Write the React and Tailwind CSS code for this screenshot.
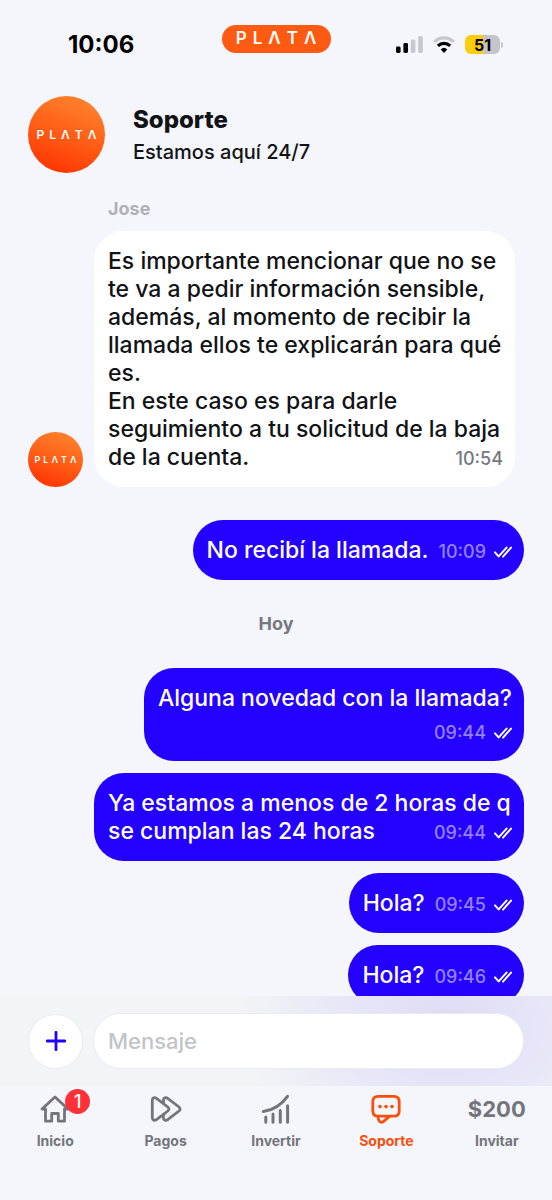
import React from "react";

const LOGO = ["P", "L", "Λ", "T", "Λ"];

function Wordmark({ className }) {
  return (
    <span className={`flex leading-none text-white ${className}`}>
      {LOGO.map((letter, i) => (
        <span key={i}>{letter}</span>
      ))}
    </span>
  );
}

function Avatar({ className, markClass }) {
  return (
    <div
      className={`flex shrink-0 items-center justify-center rounded-full bg-[linear-gradient(200deg,#ff7d29_15%,#ff5a14_55%,#ff3000_95%)] ${className}`}
    >
      <Wordmark className={markClass} />
    </div>
  );
}

function Checks() {
  return (
    <svg viewBox="0 0 18 12" className="h-3 w-[18px] text-white" fill="none" stroke="currentColor" strokeWidth="2" strokeLinecap="round" strokeLinejoin="round" aria-hidden="true">
      <path d="M1 6.4 4.6 10.4 12.6 1.6" />
      <path d="M9 10.6 17 1.6" />
    </svg>
  );
}

function Stamp({ time, className = "" }) {
  return (
    <span className={`flex shrink-0 items-center gap-2 text-[18px] leading-6 font-medium text-[#9580ff] ${className}`}>
      <time>{time}</time>
      <Checks />
    </span>
  );
}

const sent = "rounded-[30px] bg-[#2400ff] py-4 pr-3 pl-3.5 text-[23px] leading-7 font-medium text-white";

function StatusBar() {
  return (
    <div className="grid h-[77px] grid-cols-3 items-center pt-3">
      <time className="pl-[68px] text-[24px] leading-7 font-bold text-black">10:06</time>
      <div className="-mt-3 flex h-7 w-[109px] items-center justify-center justify-self-center rounded-full bg-[#ff5a12]">
        <Wordmark className="gap-1.5 text-[17px] font-semibold" />
      </div>
      <div className="flex items-center gap-[10px] justify-self-end pr-[49px]">
        <svg viewBox="0 0 27 17" className="h-[17px] w-[27px]" aria-hidden="true">
          <rect x="0" y="10.5" width="4.6" height="6.5" rx="1.4" fill="#000" />
          <rect x="7.4" y="7" width="4.6" height="10" rx="1.4" fill="#000" />
          <rect x="14.8" y="3.6" width="4.6" height="13.4" rx="1.4" fill="#c7c8cd" />
          <rect x="22.2" y="0" width="4.6" height="17" rx="1.4" fill="#c7c8cd" />
        </svg>
        <svg viewBox="0 0 22 17" className="h-[17px] w-[22px]" fill="none" strokeWidth="3.1" aria-hidden="true">
          <path d="M1.2 5.9A14 14 0 0 1 20.8 5.9" stroke="#c7c8cd" />
          <path d="M4.9 9.8A8.8 8.8 0 0 1 17.1 9.8" stroke="#000" />
          <path d="M11 17 7.7 13.4A4.8 4.8 0 0 1 14.3 13.4Z" fill="#000" />
        </svg>
        <div className="flex items-center gap-px">
          <div className="flex h-[19px] w-[35px] items-center justify-center rounded-md bg-[linear-gradient(90deg,#fbcd0b_51%,#c4c4ca_51%)] text-[16px] leading-none font-bold text-black">
            51
          </div>
          <div className="h-1.5 w-0.5 rounded-r-full bg-[#c4c4ca]" />
        </div>
      </div>
    </div>
  );
}

function Tab({ label, active, children }) {
  return (
    <a href="#" className={`flex flex-col items-center ${active ? "text-[#fb4d0c]" : "text-[#73757b]"}`}>
      <span className="relative flex h-8 items-center">{children}</span>
      <span className="mt-[7px] text-[14px] leading-[18px] font-bold">{label}</span>
    </a>
  );
}

const line = {
  fill: "none",
  stroke: "currentColor",
  strokeWidth: 2.8,
  strokeLinecap: "round",
  strokeLinejoin: "round",
  "aria-hidden": true,
};

export default function App() {
  return (
    <div className="flex h-screen flex-col overflow-hidden bg-[#f4f6fb] font-['Inter',sans-serif] text-[#121316]">
      <StatusBar />

      <header className="mt-[19px] flex items-center gap-7 px-7">
        <Avatar className="size-[77px]" markClass="gap-[5px] text-[12px] font-semibold" />
        <div className="pt-0.5">
          <h1 className="text-[24px] leading-8 font-extrabold">Soporte</h1>
          <p className="text-[20px] leading-8 font-medium">Estamos aquí 24/7</p>
        </div>
      </header>

      <main className="flex min-h-0 flex-1 flex-col overflow-hidden px-7 pt-6">
        <div className="pl-20 text-[18px] leading-6 font-bold text-[#afb1b6]">Jose</div>
        <div className="mt-2.5 flex shrink-0 items-end gap-[11px]">
          <Avatar className="size-[55px]" markClass="gap-[3px] text-[9px] font-semibold" />
          <div className="w-[421px] rounded-[30px] bg-white py-4 pr-3 pl-3.5 text-[23px] leading-7 font-medium">
            Es importante mencionar que no se te va a pedir información sensible, además, al momento de recibir la llamada ellos te explicarán para qué es.
            <br />
            En este caso es para darle seguimiento a tu solicitud de la baja de la cuenta.
            <time className="float-right mt-1 text-[18px] leading-6 font-medium text-[#76787d]">10:54</time>
          </div>
        </div>

        <div className="mt-[33px] flex shrink-0 flex-col items-end">
          <div className={`flex items-end gap-2.5 ${sent}`}>
            <span>No recibí la llamada.</span>
            <Stamp time="10:09" />
          </div>
        </div>

        <div className="my-8 shrink-0 text-center text-[18px] leading-6 font-bold text-[#76787d]">Hoy</div>

        <div className="flex shrink-0 flex-col items-end gap-3">
          <div className={`flex flex-col items-end gap-[9px] ${sent}`}>
            <span>Alguna novedad con la llamada?</span>
            <Stamp time="09:44" />
          </div>
          <div className={`max-w-[430px] ${sent}`}>
            Ya estamos a menos de 2 horas de q se cumplan las 24 horas
            <Stamp time="09:44" className="float-right mt-1" />
          </div>
          <div className={`flex items-end gap-2.5 ${sent}`}>
            <span>Hola?</span>
            <Stamp time="09:45" />
          </div>
          <div className={`flex items-end gap-2.5 ${sent}`}>
            <span>Hola?</span>
            <Stamp time="09:46" />
          </div>
        </div>
      </main>

      <form
        onSubmit={(e) => e.preventDefault()}
        className="flex shrink-0 items-center gap-2.5 bg-[#f3f4f6] bg-[radial-gradient(ellipse_38%_170%_at_81%_30%,#dedcf6_0%,#e7e5f7_45%,#f3f4f6_100%)] px-7 py-[17px]"
      >
        <button type="button" aria-label="Adjuntar" className="flex size-[55px] shrink-0 items-center justify-center rounded-full border border-[#ececf0] bg-white text-[#2400ff]">
          <svg viewBox="0 0 20 20" className="size-5" {...line}>
            <path d="M10 1.3V18.7M1.3 10H18.7" />
          </svg>
        </button>
        <input
          type="text"
          aria-label="Mensaje"
          placeholder="Mensaje"
          className="h-14 min-w-0 flex-1 rounded-full border border-[#ececf0] bg-white px-3.5 text-[22px] font-medium placeholder:text-[#c3c4c6]"
        />
      </form>

      <nav className="grid h-[114px] shrink-0 grid-cols-5 content-start pt-[7px]">
        <Tab label="Inicio">
          <svg viewBox="0 0 30 28" className="h-7 w-[30px]" {...line}>
            <path d="M15 2 28 14H24.5V26.2H18.3V18.5H11.7V26.2H5.5V14H2Z" />
          </svg>
          <span className="absolute -top-1 left-[25px] flex size-[25px] items-center justify-center rounded-full bg-[#ff3038] text-[18px] leading-none font-medium text-white">1</span>
        </Tab>
        <Tab label="Pagos">
          <svg viewBox="0 0 32 26" className="h-[26px] w-8" {...line}>
            <path d="M2.3 4.2C2.3 1.8 4.6 1 6.5 2.4L17.8 11Q20 13 17.8 15L6.5 23.6C4.6 25 2.3 24.2 2.3 21.8Z" />
            <path d="M13.4 7.2V4.2C13.4 1.8 15.8 1 17.7 2.4L29 11Q31.2 13 29 15L17.7 23.6C15.8 25 13.4 24.2 13.4 21.8V18.8" />
          </svg>
        </Tab>
        <Tab label="Invertir">
          <svg viewBox="0 0 30 30" className="size-[30px]" {...line} strokeWidth="3">
            <path d="M2.3 17.5Q17 15.5 26.5 2.3M4.8 23V28.3M12 20V28.3M19.3 16.5V28.3M26.6 11.8V28.3" />
          </svg>
        </Tab>
        <Tab label="Soporte" active>
          <svg viewBox="0 0 30 30" className="size-[30px]" {...line}>
            <path d="M7 2.4H23Q28.2 2.4 28.2 7.6V17Q28.2 22.2 23 22.2H7Q1.8 22.2 1.8 17V7.6Q1.8 2.4 7 2.4Z" />
            <path d="M6.8 22.4C7.2 25 8.6 28.4 10.6 28.4C13.4 28.4 14.8 24.2 18.6 22.4" />
            <g fill="currentColor" stroke="none">
              <circle cx="9" cy="12.6" r="1.8" />
              <circle cx="15" cy="12.6" r="1.8" />
              <circle cx="21" cy="12.6" r="1.8" />
            </g>
          </svg>
        </Tab>
        <Tab label="Invitar">
          <span className="text-[22px] leading-7 font-bold">$200</span>
        </Tab>
      </nav>
    </div>
  );
}
